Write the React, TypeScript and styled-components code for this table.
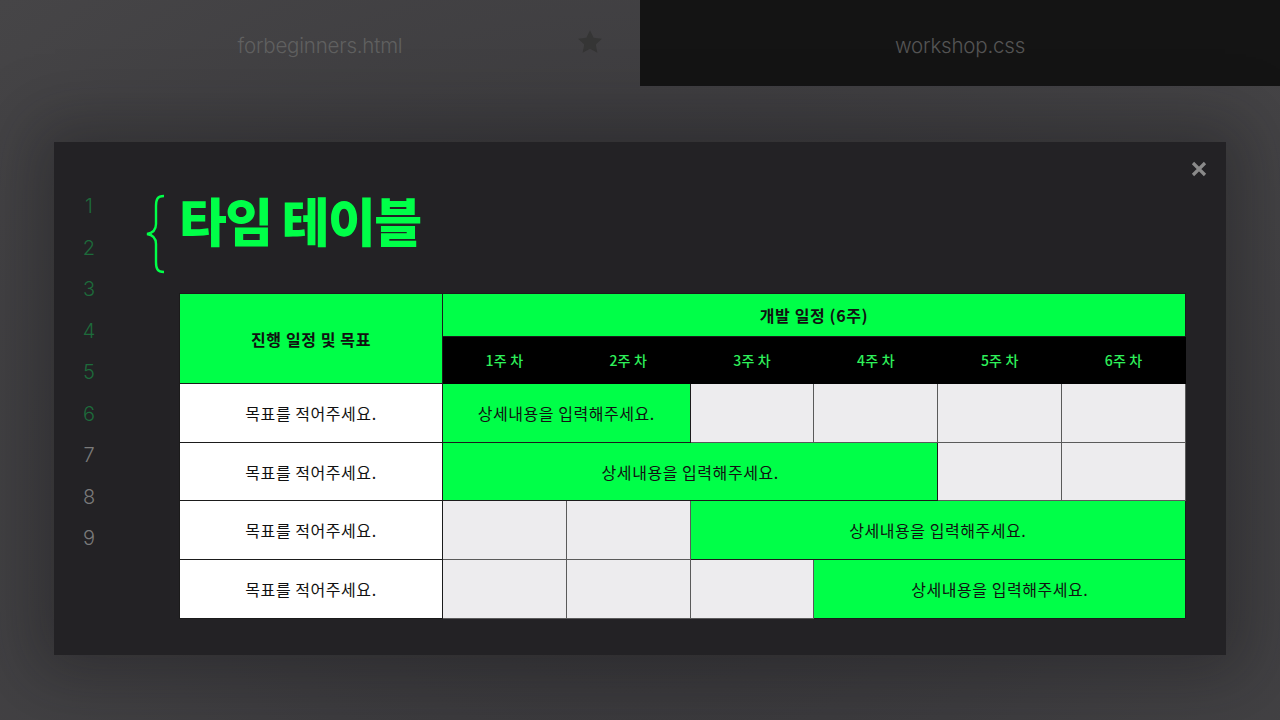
import React from "react";
import styled, { createGlobalStyle } from "styled-components";

const Global = createGlobalStyle`
  html, body { margin: 0; padding: 0; }
  body {
    width: 1280px; height: 720px; overflow: hidden;
    background: #444346;
    font-family: "Noto Sans CJK KR", "Noto Sans", sans-serif;
  }
`;

const Page = styled.div`
  width: 1280px;
  height: 720px;
  display: flex;
  flex-direction: column;
  background: radial-gradient(ellipse at 50% 70%, #38373a 0%, #3d3c3f 45%, #464547 100%);
`;

const Tabs = styled.div`
  display: flex;
  height: 86px;
`;

const Tab = styled.div<{ $active?: boolean }>`
  flex: 1;
  position: relative;
  display: flex;
  align-items: center;
  justify-content: center;
  padding-top: 4px;
  box-sizing: border-box;
  background: ${(p) => (p.$active ? "#141414" : "transparent")};
  color: ${(p) => (p.$active ? "#555555" : "#606060")};
  font-family: Inter, "Noto Sans", sans-serif;
  font-weight: 300;
  font-size: 20.5px;
  letter-spacing: -0.2px;
`;

const Star = styled.svg`
  position: absolute;
  left: 575px;
  top: 27px;
`;

const Stage = styled.div`
  flex: 1;
  padding: 56px 54px 65px 54px;
  display: flex;
`;

const Modal = styled.div`
  flex: 1;
  position: relative;
  background: #232225;
  box-shadow: 0 0 60px 20px rgba(20, 20, 22, 0.35);
  display: flex;
`;

const Close = styled.svg`
  position: absolute;
  right: 18px;
  top: 18px;
`;

const Gutter = styled.div`
  width: 70px;
  padding-top: 44px;
  display: flex;
  flex-direction: column;
  align-items: center;
`;

const LineNo = styled.div<{ $dim?: boolean }>`
  height: 41.5px;
  line-height: 41.5px;
  font-family: Inter, "Noto Sans", sans-serif;
  font-weight: 300;
  font-size: 20px;
  color: ${(p) => (p.$dim ? "#7a7a7a" : "#1d6b3b")};
`;

const Content = styled.div`
  flex: 1;
  padding-top: 52px;
  padding-left: 20px;
  display: flex;
  flex-direction: column;
`;

const TitleRow = styled.div`
  display: flex;
  align-items: flex-start;
  height: 99px;
`;

const Title = styled.h1`
  margin: 0;
  margin-left: 13px;
  margin-top: -4px;
  font-family: "Noto Sans CJK KR", sans-serif;
  font-weight: 900;
  font-size: 52px;
  line-height: 60px;
  letter-spacing: -1.6px;
  color: #00ff48;
`;

const Table = styled.table`
  margin-left: 35px;
  width: 1007px;
  border-collapse: collapse;
  table-layout: fixed;
  font-family: "Noto Sans CJK KR", sans-serif;
`;

const Th = styled.th<{ $dark?: boolean; $h: number }>`
  height: ${(p) => p.$h}px;
  padding: 0;
  background: ${(p) => (p.$dark ? "#000" : "#00ff48")};
  color: ${(p) => (p.$dark ? "#2ef05a" : "#111")};
  font-size: ${(p) => (p.$dark ? "14px" : "16px")};
  font-weight: ${(p) => (p.$dark ? 500 : 700)};
  letter-spacing: ${(p) => (p.$dark ? "0.2px" : "0.6px")};
  border: 1px solid ${(p) => (p.$dark ? "#000" : "#1b1b1b")};
  text-align: center;
`;

const Td = styled.td<{ $kind: "goal" | "fill" | "empty" }>`
  height: 57.7px;
  padding: 0;
  text-align: center;
  font-size: 16px;
  letter-spacing: 0.55px;
  color: #111;
  background: ${(p) =>
    p.$kind === "goal" ? "#ffffff" : p.$kind === "fill" ? "#00ff48" : "#edecee"};
  border: 1px solid ${(p) => (p.$kind === "empty" ? "#5a5a5a" : "#1b1b1b")};
`;

const rows: number[][] = [
  [0, 2],
  [0, 4],
  [2, 4],
  [3, 3],
];

const DETAIL = "상세내용을 입력해주세요.";

export default function App() {
  return (
    <>
      <Global />
      <Page>
        <Tabs>
          <Tab>
            forbeginners.html
            <Star width="30" height="30" viewBox="0 0 24 24">
              <path
                d="M12 2.5l2.9 6.1 6.6.8-4.9 4.6 1.3 6.6L12 17.3l-5.9 3.3 1.3-6.6-4.9-4.6 6.6-.8z"
                fill="#353535"
              />
            </Star>
          </Tab>
          <Tab $active>workshop.css</Tab>
        </Tabs>
        <Stage>
          <Modal>
            <Close width="18" height="18" viewBox="0 0 18 18">
              <path d="M3 3L15 15M15 3L3 15" stroke="#8a8a8a" strokeWidth="3.2" strokeLinecap="butt" />
            </Close>
            <Gutter>
              {[1, 2, 3, 4, 5, 6, 7, 8, 9].map((n) => (
                <LineNo key={n} $dim={n > 6}>
                  {n}
                </LineNo>
              ))}
            </Gutter>
            <Content>
              <TitleRow>
                <svg width="22" height="80" viewBox="0 0 22 80">
                  <path
                    d="M20 2 C13 2 12 6 12 12 L12 30 C12 36 9 39 3 40 C9 41 12 44 12 50 L12 68 C12 74 13 78 20 78"
                    fill="none"
                    stroke="#00ff48"
                    strokeWidth="2.4"
                  />
                </svg>
                <Title>타임 테이블</Title>
              </TitleRow>
              <Table>
                <colgroup>
                  <col style={{ width: "263px" }} />
                  {[0, 1, 2, 3, 4, 5].map((i) => (
                    <col key={i} />
                  ))}
                </colgroup>
                <thead>
                  <tr>
                    <Th rowSpan={2} $h={42}>
                      진행 일정 및 목표
                    </Th>
                    <Th colSpan={6} $h={42}>
                      개발 일정 (6주)
                    </Th>
                  </tr>
                  <tr>
                    {[1, 2, 3, 4, 5, 6].map((w) => (
                      <Th key={w} $dark $h={46}>
                        {w}주 차
                      </Th>
                    ))}
                  </tr>
                </thead>
                <tbody>
                  {rows.map(([start, span], ri) => {
                    const cells: React.ReactNode[] = [];
                    for (let i = 0; i < 6; i++) {
                      if (i === start) {
                        cells.push(
                          <Td key={i} $kind="fill" colSpan={span}>
                            {DETAIL}
                          </Td>
                        );
                        i += span - 1;
                      } else {
                        cells.push(<Td key={i} $kind="empty" />);
                      }
                    }
                    return (
                      <tr key={ri}>
                        <Td $kind="goal">목표를 적어주세요.</Td>
                        {cells}
                      </tr>
                    );
                  })}
                </tbody>
              </Table>
            </Content>
          </Modal>
        </Stage>
      </Page>
    </>
  );
}
